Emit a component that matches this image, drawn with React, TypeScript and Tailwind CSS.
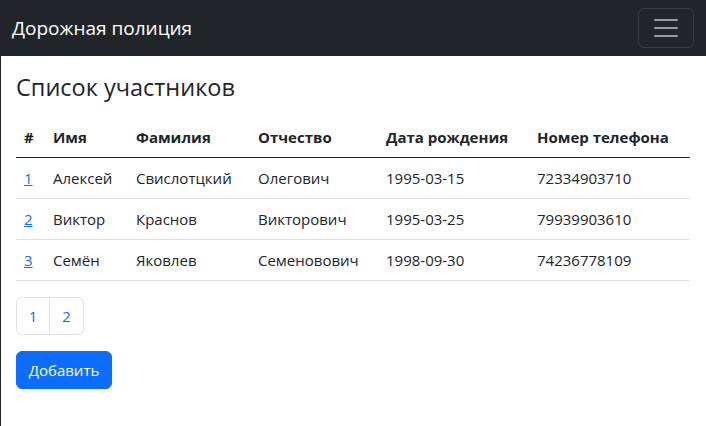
import React from 'react';

const rows = [
  { id: 1, name: 'Алексей', surname: 'Свислотцкий', patronymic: 'Олегович', birth: '1995-03-15', phone: '72334903710' },
  { id: 2, name: 'Виктор', surname: 'Краснов', patronymic: 'Викторович', birth: '1995-03-25', phone: '79939903610' },
  { id: 3, name: 'Семён', surname: 'Яковлев', patronymic: 'Семеновович', birth: '1998-09-30', phone: '74236778109' },
];

export default function App() {
  return (
    <div className="min-h-[426px] bg-white text-[#212529] flex flex-col" style={{ fontFamily: '"Open Sans", "Noto Sans", sans-serif' }}>
      {/* Navbar */}
      <nav className="h-14 bg-[#212529] flex items-center justify-between pl-3 pr-3">
        <a href="#" className="text-white text-[19px] leading-[30px]">Дорожная полиция</a>
        <button className="w-14 h-10 border border-white/10 rounded-md flex items-center justify-center">
          <svg width="30" height="30" viewBox="0 0 30 30">
            <path d="M4 7h22M4 15h22M4 23h22" stroke="rgba(255,255,255,0.55)" strokeWidth="2" strokeLinecap="round" />
          </svg>
        </button>
      </nav>

      {/* Content */}
      <div className="flex-1 border-l border-[#212529] pl-[15px] pr-4">
        <h3 className="mt-4 mb-[15px] text-[23.5px] leading-[30px] font-normal">Список участников</h3>

        <table className="w-[674px] text-[15px] leading-6 border-collapse mb-4">
          <thead>
            <tr className="border-b border-[#212529] font-bold text-left">
              <th className="p-2 w-[29px]">#</th>
              <th className="p-2 w-[83px]">Имя</th>
              <th className="p-2 w-[122px]">Фамилия</th>
              <th className="p-2 w-[128px]">Отчество</th>
              <th className="p-2 w-[151px]">Дата рождения</th>
              <th className="p-2">Номер телефона</th>
            </tr>
          </thead>
          <tbody>
            {rows.map((r) => (
              <tr key={r.id} className="border-b border-[#dee2e6]">
                <td className="p-2">
                  <a href="#" className="text-[#0d6efd] underline">{r.id}</a>
                </td>
                <td className="p-2">{r.name}</td>
                <td className="p-2">{r.surname}</td>
                <td className="p-2">{r.patronymic}</td>
                <td className="p-2">{r.birth}</td>
                <td className="p-2">{r.phone}</td>
              </tr>
            ))}
          </tbody>
        </table>

        {/* Pagination */}
        <ul className="flex mb-4 text-[15px]">
          <li>
            <a href="#" className="block w-[34px] text-center py-1.5 leading-6 text-[#0d6efd] border border-[#dee2e6] rounded-l-md">1</a>
          </li>
          <li>
            <a href="#" className="block w-[34px] text-center py-1.5 leading-6 text-[#0d6efd] border border-l-0 border-[#dee2e6] rounded-r-md">2</a>
          </li>
        </ul>

        <button className="w-24 bg-[#0d6efd] border border-[#0d6efd] text-white text-[15px] py-1.5 leading-6 rounded-md">Добавить</button>
      </div>
    </div>
  );
}
